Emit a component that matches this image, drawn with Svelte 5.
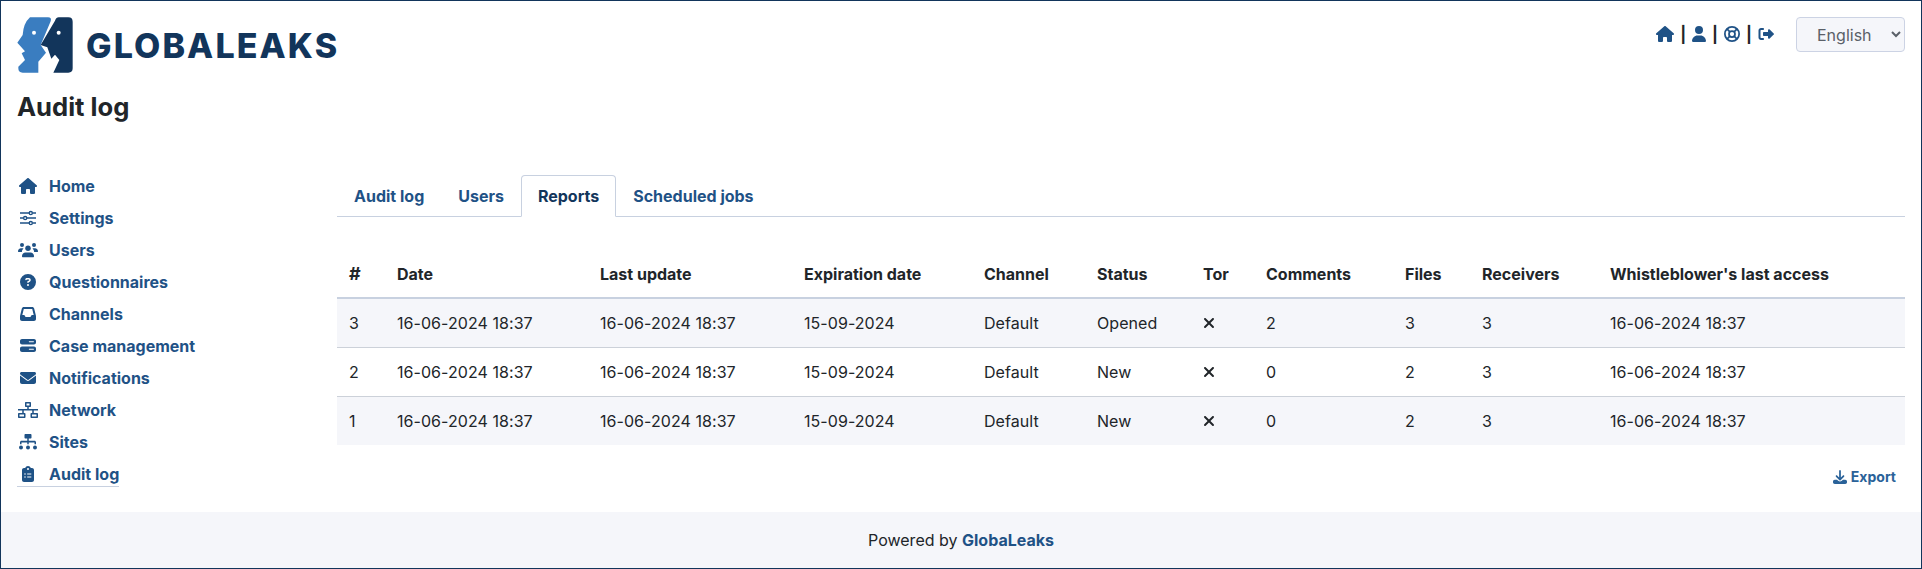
<script>
	const nav = ['Home', 'Settings', 'Users', 'Questionnaires', 'Channels', 'Case management', 'Notifications', 'Network', 'Sites', 'Audit log'];
	const tabs = ['Audit log', 'Users', 'Reports', 'Scheduled jobs'];
	const columns = ['#', 'Date', 'Last update', 'Expiration date', 'Channel', 'Status', 'Tor', 'Comments', 'Files', 'Receivers', "Whistleblower's last access"];
	const rows = [
		{ id: 3, status: 'Opened', comments: 2, files: 3 },
		{ id: 2, status: 'New', comments: 0, files: 2 },
		{ id: 1, status: 'New', comments: 0, files: 2 }
	];
	const stamp = '16-06-2024 18:37';
</script>

{#snippet houseIcon()}
	<svg viewBox="0 0 576 512" class="icon"><path d="M575.8 255.5c0 18-15 32.1-32 32.1h-32l.7 160.2c0 2.7-.2 5.4-.5 8.1V472c0 22.1-17.9 40-40 40H456c-1.1 0-2.2 0-3.3-.1c-1.4 .1-2.8 .1-4.2 .1H416 392c-22.1 0-40-17.9-40-40V448 384c0-17.7-14.3-32-32-32H256c-17.7 0-32 14.3-32 32v64 24c0 22.1-17.9 40-40 40H160 128.1c-1.5 0-3-.1-4.5-.2c-1.2 .1-2.4 .2-3.6 .2H104c-22.1 0-40-17.9-40-40V360c0-.9 0-1.9 .1-2.8V287.6H32c-18 0-32-14-32-32.1c0-9 3-17 10-24L266.4 8c7-7 15-8 22-8s15 2 21 7L564.8 231.5c8 7 12 15 11 24z" /></svg>
{/snippet}

{#snippet userIcon()}
	<svg viewBox="0 0 448 512" class="icon"><path d="M224 256A128 128 0 1 0 224 0a128 128 0 1 0 0 256zm-45.7 48C79.8 304 0 383.8 0 482.3C0 498.7 13.3 512 29.7 512H418.3c16.4 0 29.7-13.3 29.7-29.7C448 383.8 368.2 304 269.7 304H178.3z" /></svg>
{/snippet}

{#snippet navIcon(name)}
	{#if name === 'Home'}
		{@render houseIcon()}
	{:else if name === 'Settings'}
		<svg viewBox="0 0 512 512" class="icon line"><path d="M0 96h290M400 96h112M0 256h110M220 256h292M0 416h290M400 416h112" /><circle cx="345" cy="96" r="50" /><circle cx="165" cy="256" r="50" /><circle cx="345" cy="416" r="50" /></svg>
	{:else if name === 'Users'}
		<svg viewBox="0 0 640 512" class="icon"><circle cx="128" cy="96" r="64" /><circle cx="512" cy="96" r="64" /><circle cx="320" cy="200" r="88" /><path d="M0 300c0-58 40-100 96-100h40c14 0 28 3 40 9-30 24-50 62-50 107H26c-14 0-26-2-26-16zM640 300c0-58-40-100-96-100h-40c-14 0-28 3-40 9 30 24 50 62 50 107h100c14 0 26-2 26-16zM240 336h160c64 0 112 50 112 120 0 18-10 32-32 32H160c-22 0-32-14-32-32 0-70 48-120 112-120z" /></svg>
	{:else if name === 'Questionnaires'}
		<svg viewBox="0 0 512 512" class="icon"><path d="M256 512A256 256 0 1 0 256 0a256 256 0 1 0 0 512zM169.8 165.3c7.9-22.3 29.1-37.3 52.8-37.3h58.3c34.9 0 63.1 28.3 63.1 63.1c0 22.6-12.1 43.5-31.7 54.8L280 264.4c-.2 13-10.9 23.6-24 23.6c-13.3 0-24-10.7-24-24V250.5c0-8.6 4.6-16.5 12.1-20.8l44.3-25.4c4.7-2.7 7.6-7.7 7.6-13.1c0-8.4-6.8-15.1-15.1-15.1H222.6c-3.4 0-6.4 2.1-7.5 5.3l-.4 1.2c-4.4 12.5-18.2 19-30.6 14.6s-19-18.2-14.6-30.6l.4-1.2zM224 352a32 32 0 1 1 64 0 32 32 0 1 1 -64 0z" /></svg>
	{:else if name === 'Channels'}
		<svg viewBox="0 0 512 512" class="icon"><path d="M121 32C91.6 32 66 52 58.9 80.5L1.9 308.4C.6 313.5 0 318.7 0 323.9V416c0 35.3 28.7 64 64 64H448c35.3 0 64-28.7 64-64V323.9c0-5.2-.6-10.4-1.9-15.5l-57-227.9C446 52 420.4 32 391 32H121zm0 64H391l48 192H387.8c-12.1 0-23.2 6.8-28.6 17.7l-14.3 28.6c-5.4 10.8-16.5 17.7-28.6 17.7H195.8c-12.1 0-23.2-6.8-28.6-17.7l-14.3-28.6c-5.4-10.8-16.5-17.7-28.6-17.7H73L121 96z" /></svg>
	{:else if name === 'Case management'}
		<svg viewBox="0 0 512 512" class="icon"><path fill-rule="evenodd" d="M64 32h384c35 0 64 29 64 64v48c0 35-29 64-64 64H64c-35 0-64-29-64-64V96c0-35 29-64 64-64zm232 72c-9 0-16 7-16 16s7 16 16 16h136c9 0 16-7 16-16s-7-16-16-16zM64 272h384c35 0 64 29 64 64v48c0 35-29 64-64 64H64c-35 0-64-29-64-64v-48c0-35 29-64 64-64zm232 72c-9 0-16 7-16 16s7 16 16 16h136c9 0 16-7 16-16s-7-16-16-16z" /></svg>
	{:else if name === 'Notifications'}
		<svg viewBox="0 0 512 512" class="icon"><path d="M48 64C21.5 64 0 85.5 0 112c0 15.1 7.1 29.3 19.2 38.4L236.8 313.6c11.4 8.5 27 8.5 38.4 0L492.8 150.4c12.1-9.1 19.2-23.3 19.2-38.4c0-26.5-21.5-48-48-48H48zM0 176V384c0 35.3 28.7 64 64 64H448c35.3 0 64-28.7 64-64V176L294.4 339.2c-22.8 17.1-54 17.1-76.8 0L0 176z" /></svg>
	{:else if name === 'Network'}
		<svg viewBox="0 0 640 512" class="icon"><path fill-rule="evenodd" d="M256 0h128c18 0 32 14 32 32v96c0 18-14 32-32 32h-40v64h296v48H504v80h104c18 0 32 14 32 32v96c0 18-14 32-32 32H432c-18 0-32-14-32-32v-96c0-18 14-32 32-32h24v-80H184v80h24c18 0 32 14 32 32v96c0 18-14 32-32 32H32c-18 0-32-14-32-32v-96c0-18 14-32 32-32h104v-80H0v-48h296v-64h-40c-18 0-32-14-32-32V32c0-18 14-32 32-32zm16 48v64h96V48zM48 400v64h144v-64zm400 0v64h144v-64z" /></svg>
	{:else if name === 'Sites'}
		<svg viewBox="0 0 576 512" class="icon"><path d="M208 0h160c18 0 32 14 32 32v80c0 18-14 32-32 32h-56v72h184c26 0 48 22 48 48v64h-48v-56H312v56h-48v-56H80v56H32v-64c0-26 22-48 48-48h184v-72h-56c-18 0-32-14-32-32V32c0-18 14-32 32-32z" /><circle cx="64" cy="432" r="64" /><circle cx="288" cy="432" r="64" /><circle cx="512" cy="432" r="64" /></svg>
	{:else}
		<svg viewBox="0 0 384 512" class="icon"><path fill-rule="evenodd" d="M192 0c-42 0-77 27-90 64H64C29 64 0 93 0 128v320c0 35 29 64 64 64h256c35 0 64-29 64-64V128c0-35-29-64-64-64h-38C269 27 234 0 192 0zm0 64a32 32 0 1 1 0 64 32 32 0 1 1 0-64zM96 232a24 24 0 1 1 0 48 24 24 0 1 1 0-48zm80 8h112c9 0 16 7 16 16s-7 16-16 16H176c-9 0-16-7-16-16s7-16 16-16zM96 328a24 24 0 1 1 0 48 24 24 0 1 1 0-48zm80 8h112c9 0 16 7 16 16s-7 16-16 16H176c-9 0-16-7-16-16s7-16 16-16z" /></svg>
	{/if}
{/snippet}

<div class="page">
	<header class="top">
		<div class="brand">
			<svg class="mark" viewBox="21 21 168 168">
				<path class="face-a" d="M60 22H114Q126 22 122 34L92 105L108 128L85 155V188H38Q25 188 25 175V170L45 150L35 130L45 124L22 98L38 75Q40 40 60 22Z" />
				<path class="face-b" d="M146 22H175Q188 22 188 35V175Q188 188 175 188H130L148 150L135 134L124 146L112 112L92 105L135 32Q139 22 146 22Z" />
				<circle cx="72" cy="68" r="6" fill="#fff" />
				<circle cx="146" cy="68" r="6" fill="#fff" />
			</svg>
			<span class="wordmark">GLOBALEAKS</span>
		</div>
		<div class="user-tools">
			<a href="#home">{@render houseIcon()}</a>
			<span class="sep">|</span>
			<a href="#user">{@render userIcon()}</a>
			<span class="sep">|</span>
			<a href="#help">
				<svg viewBox="0 0 512 512" class="icon ring"><circle cx="256" cy="256" r="228" /><circle cx="256" cy="256" r="96" /><path d="M95 95l93 93M417 95l-93 93M95 417l93-93M417 417l-93-93" /></svg>
			</a>
			<span class="sep">|</span>
			<a href="#logout">
				<svg viewBox="0 0 512 512" class="icon"><path d="M96 64h64c18 0 32 14 32 32s-14 32-32 32H96c-9 0-16 7-16 16v224c0 9 7 16 16 16h64c18 0 32 14 32 32s-14 32-32 32H96c-44 0-80-36-80-80V144c0-44 36-80 80-80zM502 273L374 401c-9 9-23 12-35 7s-19-17-19-30v-58H192c-18 0-32-14-32-32v-64c0-18 14-32 32-32h128v-58c0-13 8-25 19-30s26-2 35 7l128 128c13 12 13 32 0 44z" /></svg>
			</a>
			<select class="lang"><option>English</option></select>
		</div>
	</header>

	<h1>Audit log</h1>

	<div class="layout">
		<nav class="side">
			{#each nav as item}
				<a href="#nav" class="side-link" class:current={item === 'Audit log'}>
					<span class="side-icon">{@render navIcon(item)}</span>
					{item}
				</a>
			{/each}
		</nav>

		<main class="content">
			<div class="tabs">
				{#each tabs as tab}
					<a href="#tab" class="tab" class:active={tab === 'Reports'}>{tab}</a>
				{/each}
			</div>

			<table>
				<thead>
					<tr>
						{#each columns as col}
							<th>{col}</th>
						{/each}
					</tr>
				</thead>
				<tbody>
					{#each rows as row (row.id)}
						<tr>
							<td>{row.id}</td>
							<td>{stamp}</td>
							<td>{stamp}</td>
							<td>15-09-2024</td>
							<td>Default</td>
							<td>{row.status}</td>
							<td>
								<svg viewBox="0 0 384 512" class="cross"><path d="M342.6 150.6c12.5-12.5 12.5-32.8 0-45.3s-32.8-12.5-45.3 0L192 210.7 86.6 105.4c-12.5-12.5-32.8-12.5-45.3 0s-12.5 32.8 0 45.3L146.7 256 41.4 361.4c-12.5 12.5-12.5 32.8 0 45.3s32.8 12.5 45.3 0L192 301.3 297.4 406.6c12.5 12.5 32.8 12.5 45.3 0s12.5-32.8 0-45.3L237.3 256 342.6 150.6z" /></svg>
							</td>
							<td>{row.comments}</td>
							<td>{row.files}</td>
							<td>3</td>
							<td>{stamp}</td>
						</tr>
					{/each}
				</tbody>
			</table>

			<div class="export-row">
				<a href="#export" class="export">
					<svg viewBox="0 0 512 512" class="icon"><path d="M224 32c0-18 14-32 32-32s32 14 32 32v242l73-73c12-12 33-12 45 0s12 33 0 45L279 374c-12 12-33 12-45 0L106 246c-12-12-12-33 0-45s33-12 45 0l73 73zM64 352h82l45 45c36 36 94 36 130 0l45-45h82c35 0 64 29 64 64v32c0 35-29 64-64 64H64c-35 0-64-29-64-64v-32c0-35 29-64 64-64z" /></svg>
					Export
				</a>
			</div>
		</main>
	</div>

	<footer>Powered by <a href="#gl">GlobaLeaks</a></footer>
</div>

<style>
	:global(body) {
		background: #fff;
	}

	.page {
		display: flex;
		flex-direction: column;
		box-sizing: border-box;
		height: 569px;
		border: 1px solid #12355b;
		font-family: Inter, sans-serif;
		font-size: 16px;
		color: #212529;
	}

	a {
		color: #1f5286;
		text-decoration: none;
	}

	.top {
		display: flex;
		justify-content: space-between;
		align-items: flex-start;
		padding: 16px 16px 0;
	}

	.brand {
		display: flex;
		align-items: center;
		gap: 13px;
		height: 56px;
	}

	.mark {
		width: 56px;
		height: 56px;
	}

	.face-a {
		fill: #3a7dc0;
	}

	.face-b {
		fill: #12355b;
	}

	.wordmark {
		font-size: 34px;
		font-weight: 800;
		color: #12355b;
		letter-spacing: 2.1px;
	}

	.user-tools {
		display: flex;
		align-items: center;
		height: 35px;
	}

	.user-tools a {
		display: flex;
		margin-bottom: 2px;
	}

	.icon {
		display: block;
		height: 16px;
		fill: currentColor;
	}

	.line {
		fill: none;
		stroke: currentColor;
		stroke-width: 44;
	}

	.ring {
		fill: none;
		stroke: currentColor;
		stroke-width: 56;
	}

	.sep {
		margin: 0 6px 2px;
		font-weight: 700;
	}

	.lang {
		box-sizing: border-box;
		width: 109px;
		height: 35px;
		margin-left: 22px;
		padding: 0 0 0 16px;
		background-color: #f5f6fa;
		border: 1px solid #ccd3e4;
		border-radius: 4px;
		font-family: inherit;
		font-size: 16px;
		color: #5a6068;
	}

	h1 {
		margin: 19px 16px 0;
		font-size: 25.6px;
		line-height: 29px;
		font-weight: 700;
		color: #212529;
	}

	.layout {
		display: flex;
		flex: 1;
		padding: 53px 16px 0;
		gap: 16px;
	}

	.side {
		display: flex;
		flex-direction: column;
		align-items: flex-start;
		gap: 7px;
		width: 304px;
		flex: none;
	}

	.side-link {
		display: flex;
		align-items: center;
		gap: 10px;
		box-sizing: border-box;
		height: 25px;
		border-bottom: 1px solid transparent;
		font-weight: 700;
	}

	.side-link.current {
		border-bottom-color: #c8d1e0;
	}

	.side-icon {
		display: flex;
		justify-content: center;
		width: 22px;
	}

	.content {
		flex: 1;
		min-width: 0;
		padding-top: 1px;
	}

	.tabs {
		display: flex;
		height: 41px;
		border-bottom: 1px solid #c8d1e0;
	}

	.tab {
		box-sizing: border-box;
		height: 42px;
		padding: 0 16px;
		border: 1px solid transparent;
		border-radius: 4px 4px 0 0;
		line-height: 40px;
		font-weight: 700;
	}

	.tab.active {
		border-color: #c8d1e0 #c8d1e0 #fff;
		background: #fff;
		color: #12355b;
	}

	table {
		width: 100%;
		margin-top: 17px;
		border-collapse: collapse;
		table-layout: fixed;
	}

	th,
	td {
		padding: 0 12px;
		text-align: left;
		white-space: nowrap;
	}

	th {
		height: 64px;
		padding-bottom: 13px;
		vertical-align: bottom;
		box-sizing: border-box;
		font-weight: 700;
		border-bottom: 2px solid #c8d1e0;
	}

	th:nth-child(1) {
		width: 48px;
		font-size: 18px;
	}

	th:nth-child(2) {
		width: 203px;
	}

	th:nth-child(3) {
		width: 204px;
	}

	th:nth-child(4) {
		width: 180px;
	}

	th:nth-child(5) {
		width: 113px;
	}

	th:nth-child(6) {
		width: 106px;
	}

	th:nth-child(7) {
		width: 63px;
	}

	th:nth-child(8) {
		width: 139px;
	}

	th:nth-child(9) {
		width: 77px;
	}

	th:nth-child(10) {
		width: 128px;
	}

	td {
		height: 48px;
		border-bottom: 1px solid #ccd1d9;
		letter-spacing: 0.06px;
	}

	tbody tr:nth-child(odd) {
		background: #f5f6fa;
	}

	tbody tr:last-child td {
		border-bottom: 0;
	}

	.cross {
		display: block;
		height: 16px;
		fill: #212529;
	}

	.export-row {
		display: flex;
		justify-content: flex-end;
		padding: 23px 9px 0 0;
	}

	.export {
		display: flex;
		align-items: center;
		gap: 4px;
		font-size: 14px;
		font-weight: 700;
		color: #2a6299;
	}

	.export .icon {
		height: 14px;
	}

	footer {
		height: 56px;
		line-height: 56px;
		text-align: center;
		background: #f5f6fa;
	}

	footer a {
		font-weight: 700;
	}
</style>
